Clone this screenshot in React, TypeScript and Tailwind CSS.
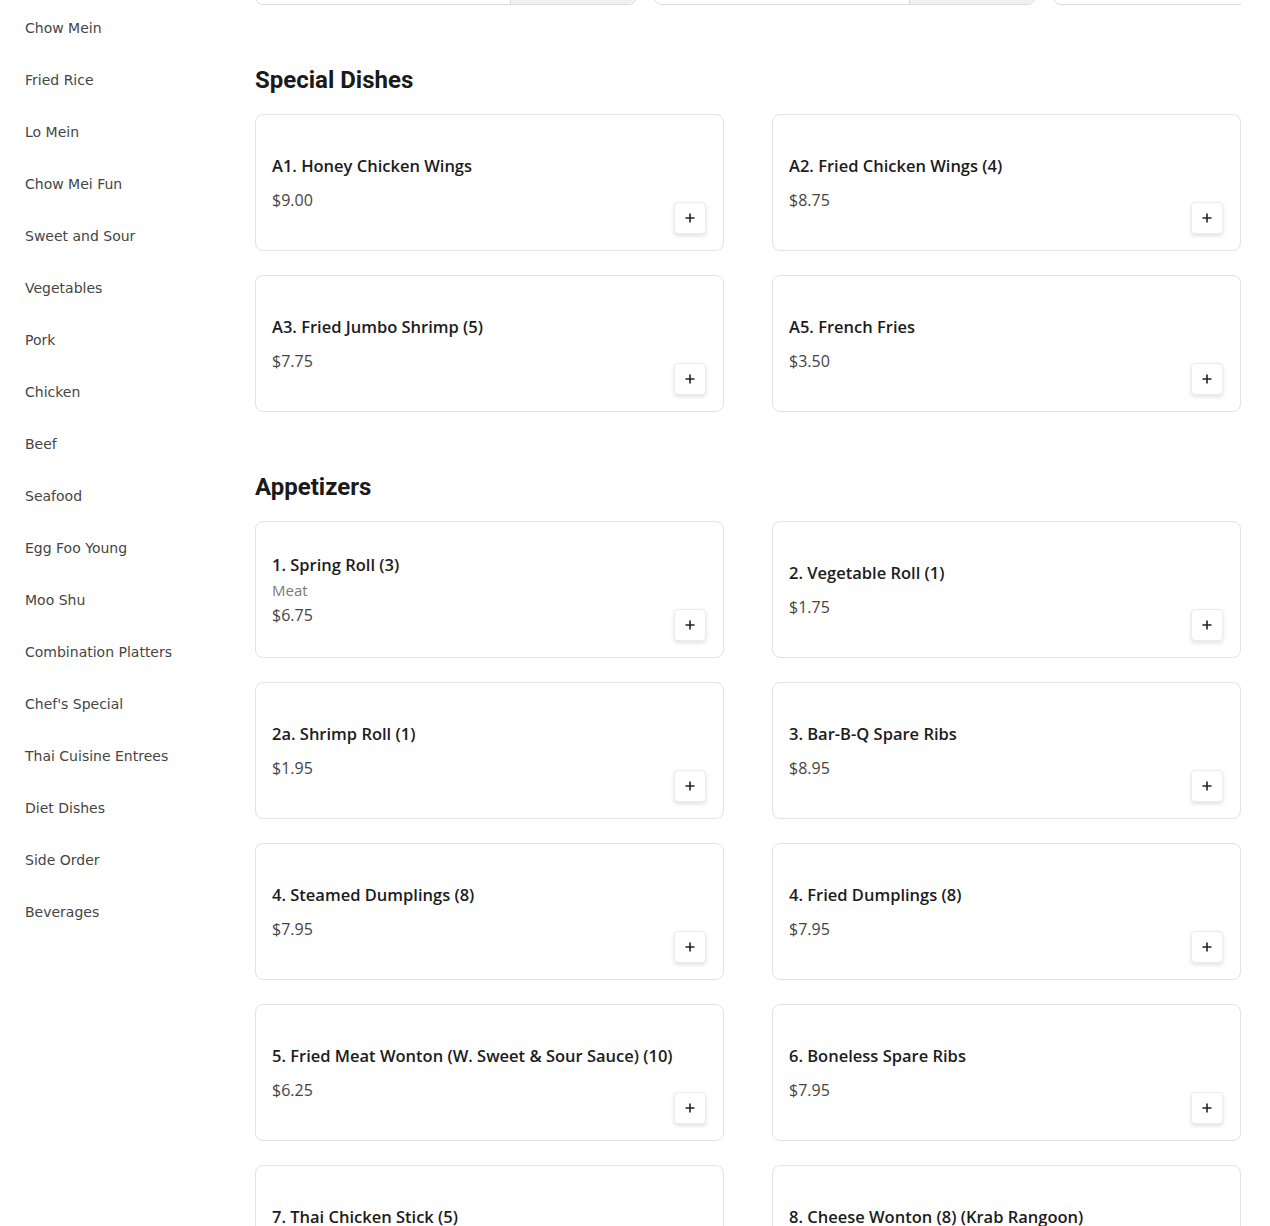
const categories = [
  "Chow Mein",
  "Fried Rice",
  "Lo Mein",
  "Chow Mei Fun",
  "Sweet and Sour",
  "Vegetables",
  "Pork",
  "Chicken",
  "Beef",
  "Seafood",
  "Egg Foo Young",
  "Moo Shu",
  "Combination Platters",
  "Chef's Special",
  "Thai Cuisine Entrees",
  "Diet Dishes",
  "Side Order",
  "Beverages",
];

type Dish = { name: string; price: string; note?: string };

const sections: { title: string; dishes: Dish[] }[] = [
  {
    title: "Special Dishes",
    dishes: [
      { name: "A1. Honey Chicken Wings", price: "$9.00" },
      { name: "A2. Fried Chicken Wings (4)", price: "$8.75" },
      { name: "A3. Fried Jumbo Shrimp (5)", price: "$7.75" },
      { name: "A5. French Fries", price: "$3.50" },
    ],
  },
  {
    title: "Appetizers",
    dishes: [
      { name: "1. Spring Roll (3)", note: "Meat", price: "$6.75" },
      { name: "2. Vegetable Roll (1)", price: "$1.75" },
      { name: "2a. Shrimp Roll (1)", price: "$1.95" },
      { name: "3. Bar-B-Q Spare Ribs", price: "$8.95" },
      { name: "4. Steamed Dumplings (8)", price: "$7.95" },
      { name: "4. Fried Dumplings (8)", price: "$7.95" },
      { name: "5. Fried Meat Wonton (W. Sweet & Sour Sauce) (10)", price: "$6.25" },
      { name: "6. Boneless Spare Ribs", price: "$7.95" },
      { name: "7. Thai Chicken Stick (5)", price: "$6.95" },
      { name: "8. Cheese Wonton (8) (Krab Rangoon)", price: "$6.95" },
    ],
  },
];

const DishCard = ({ dish }: { dish: Dish }) => (
  <div className="flex h-[137px] items-center justify-between rounded-lg border border-[#e3e3e3] bg-white py-4 pl-4 pr-[17px]">
    <div className="flex min-w-0 flex-col">
      <div className="whitespace-nowrap text-[16.5px] font-[550] leading-6 text-[#1c1c1c]">{dish.name}</div>
      {dish.note && <div className="mt-[3px] text-[15px] leading-5 text-[#7a7a7a]">{dish.note}</div>}
      <div className={`${dish.note ? "mt-[3px]" : "mt-[10px]"} text-[16px] leading-6 text-[#444]`}>{dish.price}</div>
    </div>
    <button className="flex h-8 w-8 shrink-0 items-center justify-center self-end rounded border border-[#ececec] bg-white text-[#222] shadow-[0_2px_4px_rgba(0,0,0,0.12)]">
      <svg width="12" height="12" viewBox="0 0 12 12">
        <path d="M6 1.5v9M1.5 6h9" stroke="currentColor" strokeWidth="1.6" />
      </svg>
    </button>
  </div>
);

export default function App() {
  return (
    <div className="flex min-h-screen bg-white" style={{ fontFamily: '"DejaVu Sans", sans-serif' }}>
      <aside className="w-[255px] shrink-0 pl-[25px] pt-[2px]">
        {categories.map((c) => (
          <div key={c} className="flex h-[52px] items-center text-[14px] text-[#454545]">
            {c}
          </div>
        ))}
      </aside>
      <main className="w-[986px] shrink-0 pb-10" style={{ fontFamily: '"Open Sans", sans-serif' }}>
        <div className="flex h-[5px] items-end gap-[17px] overflow-hidden">
          {[0, 1].map((i) => (
            <div key={i} className="flex h-10 w-[382px] shrink-0 overflow-hidden rounded-lg border border-[#dcdcdc]">
              <div className="flex-1 bg-white" />
              <div className="w-[126px] border-l border-[#dcdcdc] bg-[#f1f1f1]" />
            </div>
          ))}
          <div className="h-10 w-[200px] shrink-0 rounded-lg border border-[#dcdcdc]" />
        </div>
        {sections.map((s) => (
          <section key={s.title} className="mt-[59px]">
            <h2
              className="mb-[18px] h-8 text-[24px] font-bold leading-8 text-[#1a1a1a]"
              style={{ fontFamily: "Roboto, sans-serif" }}
            >
              {s.title}
            </h2>
            <div className="grid grid-cols-2 gap-x-12 gap-y-6">
              {s.dishes.map((d) => (
                <DishCard key={d.name} dish={d} />
              ))}
            </div>
          </section>
        ))}
      </main>
    </div>
  );
}
